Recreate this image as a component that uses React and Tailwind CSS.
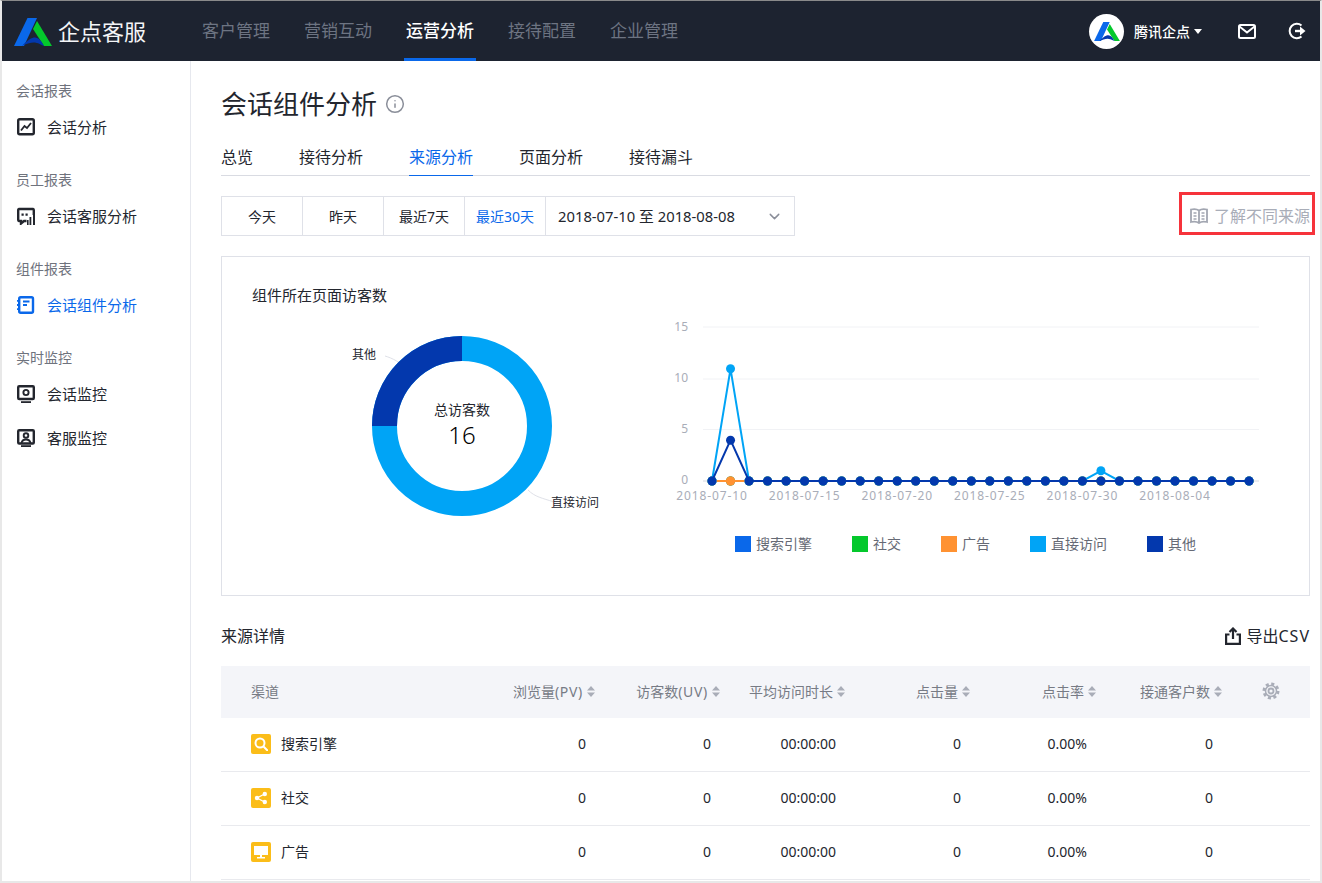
import { ChevronDown, Info } from "lucide-react";

const NAV = ["客户管理", "营销互动", "运营分析", "接待配置", "企业管理"];
const TABS = ["总览", "接待分析", "来源分析", "页面分析", "接待漏斗"];
const RANGES = ["今天", "昨天", "最近7天", "最近30天"];
const LEGEND = [
  { label: "搜索引擎", color: "bg-[#0a68ea]" },
  { label: "社交", color: "bg-[#04c82c]" },
  { label: "广告", color: "bg-[#ff9232]" },
  { label: "直接访问", color: "bg-[#00a4f6]" },
  { label: "其他", color: "bg-[#0338ad]" }
];
const COLUMNS = [
  { label: "浏览量", unit: "(PV)" },
  { label: "访客数", unit: "(UV)" },
  { label: "平均访问时长" },
  { label: "点击量" },
  { label: "点击率" },
  { label: "接通客户数" }
];
const ROWS = [
  { name: "搜索引擎", icon: "search", values: ["0", "0", "00:00:00", "0", "0.00%", "0"] },
  { name: "社交", icon: "share", values: ["0", "0", "00:00:00", "0", "0.00%", "0"] },
  { name: "广告", icon: "screen", values: ["0", "0", "00:00:00", "0", "0.00%", "0"] }
];

const LINE_X = (index) => 52 + index * 18.52;
const LINE_Y = (value) => 165 - value * 10.2;
const makeSeries = (spikes) => Array.from({ length: 30 }, (_, index) => spikes[index] || 0);
const SERIES = [
  { color: "#0a68ea", values: makeSeries({}) },
  { color: "#04c82c", values: makeSeries({}) },
  { color: "#ff9232", values: makeSeries({}) },
  { color: "#00a4f6", values: makeSeries({ 1: 11, 21: 1 }) },
  { color: "#0338ad", values: makeSeries({ 1: 4 }) }
];
const DATE_LABELS = [
  [0, "2018-07-10"],
  [5, "2018-07-15"],
  [10, "2018-07-20"],
  [15, "2018-07-25"],
  [20, "2018-07-30"],
  [25, "2018-08-04"]
];

function Logo({ className }) {
  return (
    <svg className={className} viewBox="0 0 38 28" fill="none">
      <path d="M0 28 13.5 0H23L10 28Z" fill="#0a68ea" />
      <path d="M23 3 38 28H30L19 11Z" fill="#04c82c" />
      <path d="M8 28C13 22 18 19.5 21 19.5 24.500 19.500 27.500 23 30 28 25 25.500 22.500 24.500 20 24.500 16 24.500 12 26 8 28Z" fill="#0338ad" />
    </svg>
  );
}

function SideIcon({ name, className }) {
  const common = { fill: "none", stroke: "currentColor", strokeWidth: 2.4 };

  return (
    <svg className={className} width="18" height="18" viewBox="0 0 18 18">
      {name === "trend" ? (
        <g {...common}>
          <rect x="1.200" y="1.200" width="15.600" height="15" rx="1.500" />
          <path d="M4 12.500 7.500 8 10 10 14 5" strokeWidth="1.800" />
        </g>
      ) : null}
      {name === "chat" ? (
        <g>
          <path d="M9.500 14H7L4 16.500V14H2A1 1 0 0 1 1.200 13V3A1 1 0 0 1 2 2H16A1 1 0 0 1 16.800 3V8" {...common} />
          <path d="M4.500 6.500h2.200v2.200H4.500zM8.500 6.500h2.200v2.200H8.500zM12.500 10h1.800v8H12.500zM16 8h2v10H16zM10 13h1.600v5H10z" fill="currentColor" />
        </g>
      ) : null}
      {name === "book" ? (
        <g>
          <rect x="2.200" y="1.200" width="13.800" height="15.600" rx="1.500" {...common} />
          <path d="M0 4h3v1.800H0zM0 8.100h3v1.800H0zM0 12.200h3V14H0z" fill="currentColor" />
          <path d="M6 5.500H12.500M6 9H10" {...common} strokeWidth="1.800" />
        </g>
      ) : null}
      {name === "monitor" ? (
        <g>
          <rect x="1.200" y="1.200" width="15.600" height="12.800" rx="1" {...common} />
          <circle cx="9" cy="7.500" r="2.600" {...common} strokeWidth="1.900" />
          <path d="M4 16.200H14V18H4z" fill="currentColor" />
        </g>
      ) : null}
      {name === "agent" ? (
        <g>
          <rect x="1.200" y="1.200" width="15.600" height="13.300" rx="1" {...common} />
          <circle cx="9" cy="6.500" r="2.300" {...common} strokeWidth="1.900" />
          <path d="M4.500 14C5 11.500 7 10.500 9 10.500S13 11.500 13.500 14" {...common} strokeWidth="1.900" />
          <path d="M4 16.200H14V18H4z" fill="currentColor" />
        </g>
      ) : null}
    </svg>
  );
}

function SideSection({ title, items }) {
  return (
    <div className="mb-[17px]">
      <div className="flex h-7 items-center pb-[2px] pl-[14px] text-[14px] text-[#6f737d]">{title}</div>
      {items.map((item) => (
        <div
          className={`flex h-11 items-center pl-[15px] text-[15px] ${item.active ? "text-[#0a68ea]" : "text-[#23262e]"}`}
          key={item.label}
        >
          <SideIcon name={item.icon} className="mr-[12px] shrink-0" />
          {item.label}
        </div>
      ))}
    </div>
  );
}

function SortCaret() {
  return (
    <svg className="ml-[4px] shrink-0" width="8" height="11" viewBox="0 0 8 11">
      <path d="M4 0 8 4.500H0ZM4 11 0 6.500H8Z" fill="#a9adb8" />
    </svg>
  );
}

function ChannelIcon({ name }) {
  return (
    <span className="mr-[10px] flex h-5 w-5 items-center justify-center rounded-[2px] bg-[#fbbd19]">
      <svg width="14" height="14" viewBox="0 0 14 14" fill="none">
        {name === "search" ? (
          <g stroke="#fff" strokeWidth="2">
            <circle cx="6" cy="6" r="4.500" />
            <path d="M9.500 9.500 13.200 13.200" strokeLinecap="round" />
          </g>
        ) : null}
        {name === "share" ? (
          <g>
            <path d="M3 7 10.500 3M3 7 10.500 11" stroke="#fff" strokeWidth="1.400" />
            <circle cx="3" cy="7" r="2.200" fill="#fff" />
            <circle cx="10.800" cy="3" r="2.200" fill="#fff" />
            <circle cx="10.800" cy="11" r="2.200" fill="#fff" />
          </g>
        ) : null}
        {name === "screen" ? <path d="M0 1h14v9H8v2h3v1.500H3V12h3v-2H0Z" fill="#fff" /> : null}
      </svg>
    </span>
  );
}

function DonutChart() {
  return (
    <svg className="ml-[118px] mt-[14px] block" width="280" height="210" viewBox="0 0 280 210">
      <path d="M45 36C52 38 60 42 70 51" stroke="#dfe1e8" fill="none" />
      <path d="M188 170C195 177 202 178 214 182" stroke="#dfe1e8" fill="none" />
      <circle cx="122" cy="106" r="77.500" fill="none" stroke="#00a4f6" strokeWidth="25" />
      <path d="M44.500 106A77.500 77.500 0 0 1 122 28.500" fill="none" stroke="#0338ad" strokeWidth="25" />
      <text x="12" y="39" fontSize="12" fill="#23262e">其他</text>
      <text x="211" y="187" fontSize="12" fill="#23262e">直接访问</text>
      <text x="122" y="95" fontSize="14" fill="#23262e" textAnchor="middle">总访客数</text>
      <text x="122" y="124" fontSize="24" fontWeight="300" fill="#000" textAnchor="middle">16</text>
    </svg>
  );
}

function LineChart() {
  return (
    <svg className="block" width="610" height="195" viewBox="0 0 610 195">
      {[15, 10, 5].map((tick) => (
        <line key={tick} x1="43" x2="599" y1={LINE_Y(tick) + (tick === 15 ? -1 : tick === 5 ? -0.5 : 0)} y2={LINE_Y(tick) + (tick === 15 ? -1 : tick === 5 ? -0.5 : 0)} stroke="#f1f2f5" />
      ))}
      <line x1="43" x2="599" y1="165" y2="165" stroke="#d5d8e0" />
      {[15, 10, 5, 0].map((tick) => (
        <text key={tick} x="28" y={LINE_Y(tick) + 3} fontSize="12" fill="#a9adb8" textAnchor="end">
          {tick}
        </text>
      ))}
      {SERIES[0].values.map((_, index) => (
        <line key={index} x1={LINE_X(index)} x2={LINE_X(index)} y1="165" y2="170" stroke="#d5d8e0" />
      ))}
      {DATE_LABELS.map(([index, label]) => (
        <text key={label} x={LINE_X(index)} y="184" fontSize="12" letterSpacing="0.9" fill="#a9adb8" textAnchor="middle">
          {label}
        </text>
      ))}
      {SERIES.map((series) => (
        <g key={series.color}>
          <polyline
            fill="none"
            stroke={series.color}
            strokeWidth="2"
            points={series.values.map((value, index) => `${LINE_X(index)},${LINE_Y(value)}`).join(" ")}
          />
          {series.values.map((value, index) => (
            <circle key={index} cx={LINE_X(index)} cy={LINE_Y(value)} r="4.500" fill={series.color} />
          ))}
        </g>
      ))}
      <circle cx={LINE_X(1)} cy="165" r="4.500" fill="#ff9232" />
    </svg>
  );
}

export default function App() {
  return (
    <div className="box-border flex h-[883px] w-[1322px] flex-col overflow-hidden border-x-2 border-b-2 border-t border-x-[#e8e8e8] border-b-[#e8e8e8] border-t-[#8a8a8a] bg-white font-['Noto_Sans','Noto_Sans_CJK_SC',sans-serif] text-[#23262e]">
      <header className="flex h-[60px] shrink-0 items-stretch bg-[#1d2330]">
        <div className="flex w-[200px] items-center pl-[12px]">
          <Logo className="mt-[1px] h-7 w-[38px]" />
          <span className="ml-[6px] text-[22px] text-[#f4f5f7]">企点客服</span>
        </div>
        <nav className="flex gap-[34px]">
          {NAV.map((item) => (
            <div
              className={`-mx-[2px] flex items-center border-b-[3px] px-[2px] pt-[3px] text-[17px] ${
                item === "运营分析" ? "border-[#0a68ea] font-medium text-white" : "border-transparent text-[#6d7482]"
              }`}
              key={item}
            >
              {item}
            </div>
          ))}
        </nav>
        <div className="ml-auto flex items-center">
          <div className="flex h-[35px] w-[35px] items-center justify-center rounded-full bg-white">
            <Logo className="h-[19px] w-[26px]" />
          </div>
          <span className="ml-[10px] text-[14px] font-medium text-white">腾讯企点</span>
          <svg className="ml-[4px]" width="8" height="5" viewBox="0 0 8 5">
            <path d="M0 0H8L4 5Z" fill="#fff" />
          </svg>
          <svg className="ml-[36px]" width="18" height="15" viewBox="0 0 18 15" fill="none" stroke="#fff" strokeWidth="2">
            <rect x="1" y="1" width="16" height="13" rx="1.500" />
            <path d="M1.500 2.500 9 8.500 16.500 2.500" />
          </svg>
          <svg className="ml-[32px] mr-[14px]" width="18" height="18" viewBox="0 0 18 18" fill="none">
            <path d="M13.500 3.500A7.200 7.200 0 1 0 13.500 14.500" stroke="#fff" strokeWidth="2" />
            <path d="M7 9H13" stroke="#fff" strokeWidth="2.400" />
            <path d="M12 4.500 17.500 9 12 13.500Z" fill="#fff" />
          </svg>
        </div>
      </header>

      <div className="flex min-h-0 flex-1">
        <aside className="w-[189px] shrink-0 border-r border-[#e6e8ee] pt-[16px]">
          <SideSection title="会话报表" items={[{ label: "会话分析", icon: "trend" }]} />
          <SideSection title="员工报表" items={[{ label: "会话客服分析", icon: "chat" }]} />
          <SideSection title="组件报表" items={[{ label: "会话组件分析", icon: "book", active: true }]} />
          <SideSection
            title="实时监控"
            items={[
              { label: "会话监控", icon: "monitor" },
              { label: "客服监控", icon: "agent" }
            ]}
          />
        </aside>

        <main className="min-w-0 flex-1 pl-[30px] pr-[10px]">
          <div className="mt-[25px] flex h-[36px] items-center">
            <h1 className="text-[26px] font-normal leading-none">会话组件分析</h1>
            <Info className="ml-[8px] text-[#8a8e99]" size={20} strokeWidth={1.8} />
          </div>

          <div className="mt-[18px] flex h-[36px] gap-[46px] border-b border-[#d9dbe2]">
            {TABS.map((tab) => (
              <div
                className={`-mb-px flex items-center border-b pb-[1px] text-[16px] ${
                  tab === "来源分析" ? "border-[#0a68ea] text-[#0a68ea]" : "border-transparent text-[#23262e]"
                }`}
                key={tab}
              >
                {tab}
              </div>
            ))}
          </div>

          <div className="mt-[20px] flex items-start justify-between">
            <div className="flex h-10 border border-[#dfe1e8] text-[14px]">
              {RANGES.map((range) => (
                <div
                  className={`flex w-[81px] items-center justify-center border-r border-[#dfe1e8] ${
                    range === "最近30天" ? "text-[#0a68ea]" : ""
                  }`}
                  key={range}
                >
                  {range}
                </div>
              ))}
              <div className="flex w-[248px] items-center pl-[12px] pr-[11px] text-[14.800px]">
                <span>2018-07-10 至 2018-08-08</span>
                <ChevronDown className="ml-auto text-[#8a8e99]" size={17} strokeWidth={2} />
              </div>
            </div>
            <div className="-mr-[5px] -mt-[4px] flex h-[43px] items-center border-[3px] border-[#f6333b] pl-[8px] pr-[2px] pt-[4px] text-[16px] text-[#a9adb8]">
              <svg className="mr-[6px]" width="18" height="16" viewBox="0 0 18 16" fill="none" stroke="#a2a6b1" strokeWidth="1.800">
                <path d="M9 2.500C7 1 3 1 1 1.500V14C3 13.500 7 13.500 9 15 11 13.500 15 13.500 17 14V1.500C15 1 11 1 9 2.500ZM9 2.500V15" />
                <path d="M3.500 5H6.500M3.500 8H6.500M3.500 11H6.500M11.500 5H14.500M11.500 8H14.500M11.500 11H14.500" strokeWidth="1.300" />
              </svg>
              了解不同来源
            </div>
          </div>

          <section className="mt-[20px] flex h-[340px] border border-[#dfe1e8]">
            <div className="w-[438px] shrink-0">
              <h2 className="ml-[30px] mt-[27px] text-[15px] font-normal leading-[22px]">组件所在页面访客数</h2>
              <DonutChart />
            </div>
            <div className="pt-[59px]">
              <LineChart />
              <div className="ml-[75px] mt-[22px] flex gap-[40px] text-[14px] text-[#666a75]">
                {LEGEND.map((item) => (
                  <div className="flex items-center" key={item.label}>
                    <span className={`mr-[5px] h-4 w-4 ${item.color}`} />
                    {item.label}
                  </div>
                ))}
              </div>
            </div>
          </section>

          <div className="mt-[24px] flex h-[32px] items-center justify-between">
            <h2 className="text-[16px] font-normal">来源详情</h2>
            <div className="flex items-center text-[16px]">
              <svg className="mr-[5px]" width="16" height="18" viewBox="0 0 16 18" fill="none" stroke="#23262e" strokeWidth="2.200">
                <path d="M4.500 7.500H1.100V16.900H14.900V7.500H11.500" />
                <path d="M8 12V2M4.500 5 8 1.500 11.500 5" />
              </svg>
              导出<span className="tracking-[1px]">CSV</span>
            </div>
          </div>

          <div className="mt-[14px] text-[14px]">
            <div className="grid h-[52px] grid-cols-[249px_125px_125px_125px_125px_126px_126px_1fr] items-center bg-[#f4f5f9] pb-[2px] text-[#777b85]">
              <div className="pl-[30px]">渠道</div>
              {COLUMNS.map((column) => (
                <div className="flex items-center justify-end" key={column.label}>
                  {column.label}
                  {column.unit ? <span className="tracking-[0.7px]">{column.unit}</span> : null}
                  <SortCaret />
                </div>
              ))}
              <div className="flex justify-end pr-[30px]">
                <svg width="18" height="18" viewBox="0 0 18 18" fill="none" stroke="#a9adb8">
                  <circle cx="9" cy="9" r="7" strokeWidth="3" strokeDasharray="3 2.500" />
                  <circle cx="9" cy="9" r="5.500" strokeWidth="1.500" />
                  <circle cx="9" cy="9" r="2.500" strokeWidth="1.800" />
                </svg>
              </div>
            </div>
            {ROWS.map((row) => (
              <div
                className="grid h-[54px] grid-cols-[249px_125px_125px_125px_125px_126px_126px_1fr] items-center border-b border-[#e9eaee] pb-[2px]"
                key={row.name}
              >
                <div className="flex items-center pl-[30px]">
                  <ChannelIcon name={row.icon} />
                  {row.name}
                </div>
                {row.values.map((value, index) => (
                  <div className="pr-[9px] text-right" key={index}>
                    {value}
                  </div>
                ))}
              </div>
            ))}
          </div>
        </main>
      </div>
    </div>
  );
}
